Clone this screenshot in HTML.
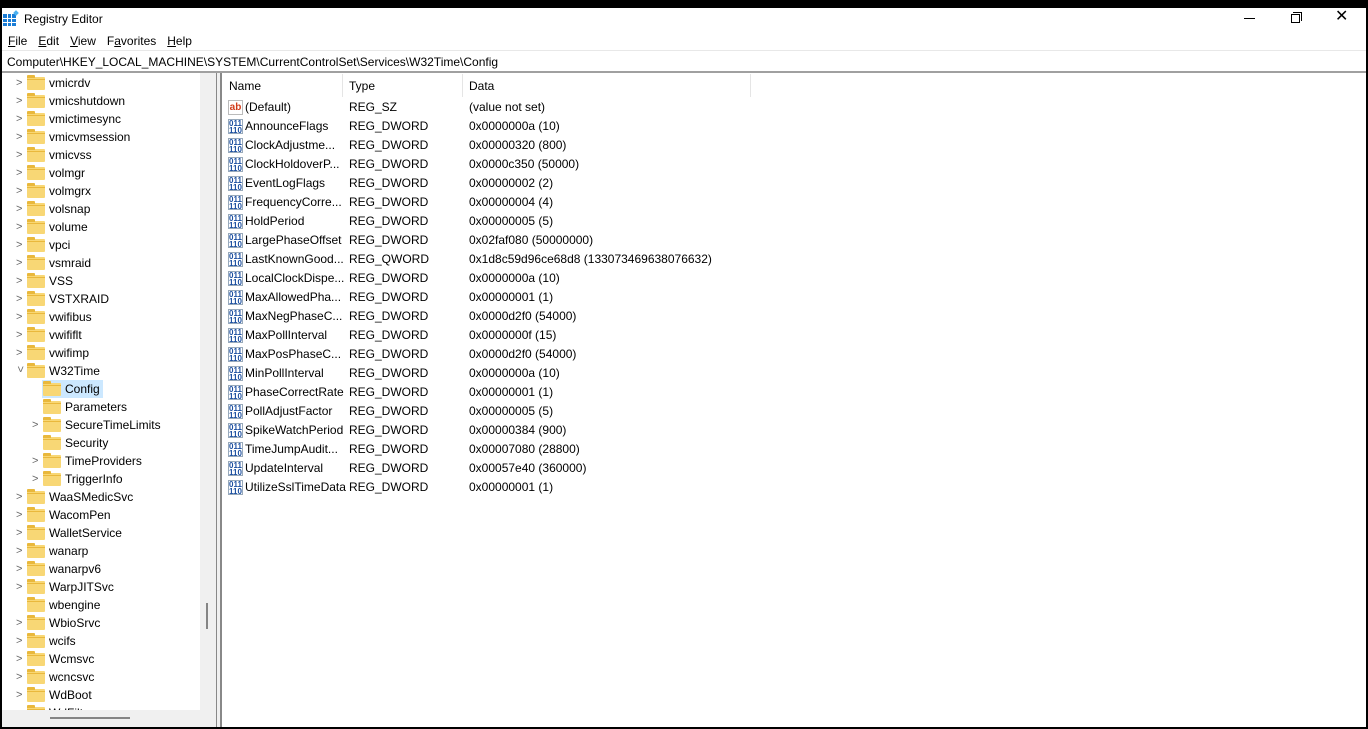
<!DOCTYPE html>
<html><head><meta charset="utf-8"><style>
*{margin:0;padding:0;box-sizing:border-box}
body{width:1368px;height:729px;overflow:hidden;background:#fff;font-family:"Liberation Sans",sans-serif;font-size:12px;color:#000;position:relative}
.a{position:absolute;white-space:nowrap}
.top{left:0;top:0;width:1368px;height:8px;background:#000}
.bot{left:0;top:727px;width:1368px;height:2px;background:#000}
.menu span{margin-right:11px}
.tr{position:absolute;height:18px;line-height:18px;white-space:nowrap}
.fd{position:absolute;top:3px;width:18px;height:13px;background:#f8d775;border-radius:1px}
.fd:before{content:"";position:absolute;left:0;top:-2px;width:8px;height:3px;background:#e9b83c;border-radius:1px 1px 0 0}
.fd:after{content:"";position:absolute;left:0;top:2px;width:18px;height:1px;background:#e9b83c}
.ch{position:absolute;top:0;width:10px;height:18px;color:#666;font-size:11px;line-height:18px}
.row{position:absolute;left:222px;height:19px;line-height:19px;white-space:nowrap;width:600px}
.row span{position:absolute;white-space:nowrap}
.ic{position:absolute;left:6px;top:2px;width:15px;height:15px;font-size:8px;font-weight:bold;line-height:7px;text-align:center;border:1px solid #9ab;background:#fff}
</style></head><body>
<div class="a top"></div>
<div class="a bot"></div>
<div class="a" style="left:0;top:8px;width:2px;height:721px;background:#000"></div>
<div class="a" style="left:1366px;top:8px;width:2px;height:721px;background:#000"></div>

<svg class="a" style="left:3px;top:10px" width="16" height="17" viewBox="0 0 16 17"><rect x="0" y="4" width="13" height="12" fill="#1a7dd6"/><g stroke="#fff" stroke-width="1"><line x1="4.5" y1="4" x2="4.5" y2="16"/><line x1="8.5" y1="4" x2="8.5" y2="16"/><line x1="0" y1="8.5" x2="13" y2="8.5"/><line x1="0" y1="12.5" x2="13" y2="12.5"/></g><rect x="11" y="1" width="4" height="4" fill="#4ab0f0" transform="rotate(45 13 3)"/></svg>
<div class="a" style="left:24px;top:12px;font-size:12px">Registry Editor</div>
<div class="a" style="left:1244px;top:18px;width:11px;height:1px;background:#000"></div>
<div class="a" style="left:1291px;top:14px;width:9px;height:9px;border:1px solid #000"></div>
<div class="a" style="left:1293px;top:12px;width:9px;height:9px;border-top:1px solid #000;border-right:1px solid #000"></div>
<div class="a" style="left:1335px;top:8px;font-size:16px;line-height:18px">✕</div>

<div class="a menu" style="left:8px;top:34px"><span><u>F</u>ile</span><span><u>E</u>dit</span><span><u>V</u>iew</span><span>F<u>a</u>vorites</span><span><u>H</u>elp</span></div>
<div class="a" style="left:2px;top:50px;width:1364px;height:1px;background:#e8e8e8"></div>
<div class="a" style="left:7px;top:55px">Computer\HKEY_LOCAL_MACHINE\SYSTEM\CurrentControlSet\Services\W32Time\Config</div>
<div class="a" style="left:2px;top:71px;width:1364px;height:2px;background:#a0a0a0"></div>

<div class="a" style="left:2px;top:73px;width:214px;height:654px;background:#f0f0f0"></div>
<div class="a" style="left:2px;top:73px;width:198px;height:637px;background:#fff"></div>
<div class="a" style="left:2px;top:74px;width:198px;height:636px;overflow:hidden">
<div class="a" style="left:40px;top:306px;width:61px;height:18px;background:#cce8ff"></div>
<div class="tr" style="left:0;top:0px;width:198px"><span class="ch" style="left:14px">&gt;</span><span class="fd" style="left:25px"></span><span class="a" style="left:47px">vmicrdv</span></div>
<div class="tr" style="left:0;top:18px;width:198px"><span class="ch" style="left:14px">&gt;</span><span class="fd" style="left:25px"></span><span class="a" style="left:47px">vmicshutdown</span></div>
<div class="tr" style="left:0;top:36px;width:198px"><span class="ch" style="left:14px">&gt;</span><span class="fd" style="left:25px"></span><span class="a" style="left:47px">vmictimesync</span></div>
<div class="tr" style="left:0;top:54px;width:198px"><span class="ch" style="left:14px">&gt;</span><span class="fd" style="left:25px"></span><span class="a" style="left:47px">vmicvmsession</span></div>
<div class="tr" style="left:0;top:72px;width:198px"><span class="ch" style="left:14px">&gt;</span><span class="fd" style="left:25px"></span><span class="a" style="left:47px">vmicvss</span></div>
<div class="tr" style="left:0;top:90px;width:198px"><span class="ch" style="left:14px">&gt;</span><span class="fd" style="left:25px"></span><span class="a" style="left:47px">volmgr</span></div>
<div class="tr" style="left:0;top:108px;width:198px"><span class="ch" style="left:14px">&gt;</span><span class="fd" style="left:25px"></span><span class="a" style="left:47px">volmgrx</span></div>
<div class="tr" style="left:0;top:126px;width:198px"><span class="ch" style="left:14px">&gt;</span><span class="fd" style="left:25px"></span><span class="a" style="left:47px">volsnap</span></div>
<div class="tr" style="left:0;top:144px;width:198px"><span class="ch" style="left:14px">&gt;</span><span class="fd" style="left:25px"></span><span class="a" style="left:47px">volume</span></div>
<div class="tr" style="left:0;top:162px;width:198px"><span class="ch" style="left:14px">&gt;</span><span class="fd" style="left:25px"></span><span class="a" style="left:47px">vpci</span></div>
<div class="tr" style="left:0;top:180px;width:198px"><span class="ch" style="left:14px">&gt;</span><span class="fd" style="left:25px"></span><span class="a" style="left:47px">vsmraid</span></div>
<div class="tr" style="left:0;top:198px;width:198px"><span class="ch" style="left:14px">&gt;</span><span class="fd" style="left:25px"></span><span class="a" style="left:47px">VSS</span></div>
<div class="tr" style="left:0;top:216px;width:198px"><span class="ch" style="left:14px">&gt;</span><span class="fd" style="left:25px"></span><span class="a" style="left:47px">VSTXRAID</span></div>
<div class="tr" style="left:0;top:234px;width:198px"><span class="ch" style="left:14px">&gt;</span><span class="fd" style="left:25px"></span><span class="a" style="left:47px">vwifibus</span></div>
<div class="tr" style="left:0;top:252px;width:198px"><span class="ch" style="left:14px">&gt;</span><span class="fd" style="left:25px"></span><span class="a" style="left:47px">vwififlt</span></div>
<div class="tr" style="left:0;top:270px;width:198px"><span class="ch" style="left:14px">&gt;</span><span class="fd" style="left:25px"></span><span class="a" style="left:47px">vwifimp</span></div>
<div class="tr" style="left:0;top:288px;width:198px"><span class="ch" style="left:13px;transform:rotate(90deg)">&gt;</span><span class="fd" style="left:25px"></span><span class="a" style="left:47px">W32Time</span></div>
<div class="tr" style="left:0;top:306px;width:198px"><span class="fd" style="left:41px"></span><span class="a" style="left:63px">Config</span></div>
<div class="tr" style="left:0;top:324px;width:198px"><span class="fd" style="left:41px"></span><span class="a" style="left:63px">Parameters</span></div>
<div class="tr" style="left:0;top:342px;width:198px"><span class="ch" style="left:30px">&gt;</span><span class="fd" style="left:41px"></span><span class="a" style="left:63px">SecureTimeLimits</span></div>
<div class="tr" style="left:0;top:360px;width:198px"><span class="fd" style="left:41px"></span><span class="a" style="left:63px">Security</span></div>
<div class="tr" style="left:0;top:378px;width:198px"><span class="ch" style="left:30px">&gt;</span><span class="fd" style="left:41px"></span><span class="a" style="left:63px">TimeProviders</span></div>
<div class="tr" style="left:0;top:396px;width:198px"><span class="ch" style="left:30px">&gt;</span><span class="fd" style="left:41px"></span><span class="a" style="left:63px">TriggerInfo</span></div>
<div class="tr" style="left:0;top:414px;width:198px"><span class="ch" style="left:14px">&gt;</span><span class="fd" style="left:25px"></span><span class="a" style="left:47px">WaaSMedicSvc</span></div>
<div class="tr" style="left:0;top:432px;width:198px"><span class="ch" style="left:14px">&gt;</span><span class="fd" style="left:25px"></span><span class="a" style="left:47px">WacomPen</span></div>
<div class="tr" style="left:0;top:450px;width:198px"><span class="ch" style="left:14px">&gt;</span><span class="fd" style="left:25px"></span><span class="a" style="left:47px">WalletService</span></div>
<div class="tr" style="left:0;top:468px;width:198px"><span class="ch" style="left:14px">&gt;</span><span class="fd" style="left:25px"></span><span class="a" style="left:47px">wanarp</span></div>
<div class="tr" style="left:0;top:486px;width:198px"><span class="ch" style="left:14px">&gt;</span><span class="fd" style="left:25px"></span><span class="a" style="left:47px">wanarpv6</span></div>
<div class="tr" style="left:0;top:504px;width:198px"><span class="ch" style="left:14px">&gt;</span><span class="fd" style="left:25px"></span><span class="a" style="left:47px">WarpJITSvc</span></div>
<div class="tr" style="left:0;top:522px;width:198px"><span class="fd" style="left:25px"></span><span class="a" style="left:47px">wbengine</span></div>
<div class="tr" style="left:0;top:540px;width:198px"><span class="ch" style="left:14px">&gt;</span><span class="fd" style="left:25px"></span><span class="a" style="left:47px">WbioSrvc</span></div>
<div class="tr" style="left:0;top:558px;width:198px"><span class="ch" style="left:14px">&gt;</span><span class="fd" style="left:25px"></span><span class="a" style="left:47px">wcifs</span></div>
<div class="tr" style="left:0;top:576px;width:198px"><span class="ch" style="left:14px">&gt;</span><span class="fd" style="left:25px"></span><span class="a" style="left:47px">Wcmsvc</span></div>
<div class="tr" style="left:0;top:594px;width:198px"><span class="ch" style="left:14px">&gt;</span><span class="fd" style="left:25px"></span><span class="a" style="left:47px">wcncsvc</span></div>
<div class="tr" style="left:0;top:612px;width:198px"><span class="ch" style="left:14px">&gt;</span><span class="fd" style="left:25px"></span><span class="a" style="left:47px">WdBoot</span></div>
<div class="tr" style="left:0;top:630px;width:198px"><span class="fd" style="left:25px"></span><span class="a" style="left:47px">WdFilter</span></div>
</div>
<div class="a" style="left:206px;top:603px;width:2px;height:26px;background:#858585"></div>
<div class="a" style="left:50px;top:717px;width:80px;height:2px;background:#858585"></div>
<div class="a" style="left:216px;top:73px;width:1px;height:654px;background:#888"></div>
<div class="a" style="left:217px;top:73px;width:3px;height:654px;background:#f0f0f0"></div>
<div class="a" style="left:220px;top:73px;width:2px;height:654px;background:#888"></div>

<div class="a" style="left:229px;top:79px">Name</div>
<div class="a" style="left:349px;top:79px">Type</div>
<div class="a" style="left:469px;top:79px">Data</div>
<div class="a" style="left:342px;top:74px;width:1px;height:23px;background:#e5e5e5"></div>
<div class="a" style="left:462px;top:74px;width:1px;height:23px;background:#e5e5e5"></div>
<div class="a" style="left:750px;top:74px;width:1px;height:23px;background:#e5e5e5"></div>

<div class="row" style="top:98px"><span class="ic" style="border-color:#bbb;color:#d13b1a;font-size:10px;line-height:13px">ab</span><span style="left:23px">(Default)</span><span style="left:127px">REG_SZ</span><span style="left:247px">(value not set)</span></div>
<div class="row" style="top:117px"><span class="ic" style="color:#1c4fa0">011<br>110</span><span style="left:23px">AnnounceFlags</span><span style="left:127px">REG_DWORD</span><span style="left:247px">0x0000000a (10)</span></div>
<div class="row" style="top:136px"><span class="ic" style="color:#1c4fa0">011<br>110</span><span style="left:23px">ClockAdjustme...</span><span style="left:127px">REG_DWORD</span><span style="left:247px">0x00000320 (800)</span></div>
<div class="row" style="top:155px"><span class="ic" style="color:#1c4fa0">011<br>110</span><span style="left:23px">ClockHoldoverP...</span><span style="left:127px">REG_DWORD</span><span style="left:247px">0x0000c350 (50000)</span></div>
<div class="row" style="top:174px"><span class="ic" style="color:#1c4fa0">011<br>110</span><span style="left:23px">EventLogFlags</span><span style="left:127px">REG_DWORD</span><span style="left:247px">0x00000002 (2)</span></div>
<div class="row" style="top:193px"><span class="ic" style="color:#1c4fa0">011<br>110</span><span style="left:23px">FrequencyCorre...</span><span style="left:127px">REG_DWORD</span><span style="left:247px">0x00000004 (4)</span></div>
<div class="row" style="top:212px"><span class="ic" style="color:#1c4fa0">011<br>110</span><span style="left:23px">HoldPeriod</span><span style="left:127px">REG_DWORD</span><span style="left:247px">0x00000005 (5)</span></div>
<div class="row" style="top:231px"><span class="ic" style="color:#1c4fa0">011<br>110</span><span style="left:23px">LargePhaseOffset</span><span style="left:127px">REG_DWORD</span><span style="left:247px">0x02faf080 (50000000)</span></div>
<div class="row" style="top:250px"><span class="ic" style="color:#1c4fa0">011<br>110</span><span style="left:23px">LastKnownGood...</span><span style="left:127px">REG_QWORD</span><span style="left:247px">0x1d8c59d96ce68d8 (133073469638076632)</span></div>
<div class="row" style="top:269px"><span class="ic" style="color:#1c4fa0">011<br>110</span><span style="left:23px">LocalClockDispe...</span><span style="left:127px">REG_DWORD</span><span style="left:247px">0x0000000a (10)</span></div>
<div class="row" style="top:288px"><span class="ic" style="color:#1c4fa0">011<br>110</span><span style="left:23px">MaxAllowedPha...</span><span style="left:127px">REG_DWORD</span><span style="left:247px">0x00000001 (1)</span></div>
<div class="row" style="top:307px"><span class="ic" style="color:#1c4fa0">011<br>110</span><span style="left:23px">MaxNegPhaseC...</span><span style="left:127px">REG_DWORD</span><span style="left:247px">0x0000d2f0 (54000)</span></div>
<div class="row" style="top:326px"><span class="ic" style="color:#1c4fa0">011<br>110</span><span style="left:23px">MaxPollInterval</span><span style="left:127px">REG_DWORD</span><span style="left:247px">0x0000000f (15)</span></div>
<div class="row" style="top:345px"><span class="ic" style="color:#1c4fa0">011<br>110</span><span style="left:23px">MaxPosPhaseC...</span><span style="left:127px">REG_DWORD</span><span style="left:247px">0x0000d2f0 (54000)</span></div>
<div class="row" style="top:364px"><span class="ic" style="color:#1c4fa0">011<br>110</span><span style="left:23px">MinPollInterval</span><span style="left:127px">REG_DWORD</span><span style="left:247px">0x0000000a (10)</span></div>
<div class="row" style="top:383px"><span class="ic" style="color:#1c4fa0">011<br>110</span><span style="left:23px">PhaseCorrectRate</span><span style="left:127px">REG_DWORD</span><span style="left:247px">0x00000001 (1)</span></div>
<div class="row" style="top:402px"><span class="ic" style="color:#1c4fa0">011<br>110</span><span style="left:23px">PollAdjustFactor</span><span style="left:127px">REG_DWORD</span><span style="left:247px">0x00000005 (5)</span></div>
<div class="row" style="top:421px"><span class="ic" style="color:#1c4fa0">011<br>110</span><span style="left:23px">SpikeWatchPeriod</span><span style="left:127px">REG_DWORD</span><span style="left:247px">0x00000384 (900)</span></div>
<div class="row" style="top:440px"><span class="ic" style="color:#1c4fa0">011<br>110</span><span style="left:23px">TimeJumpAudit...</span><span style="left:127px">REG_DWORD</span><span style="left:247px">0x00007080 (28800)</span></div>
<div class="row" style="top:459px"><span class="ic" style="color:#1c4fa0">011<br>110</span><span style="left:23px">UpdateInterval</span><span style="left:127px">REG_DWORD</span><span style="left:247px">0x00057e40 (360000)</span></div>
<div class="row" style="top:478px"><span class="ic" style="color:#1c4fa0">011<br>110</span><span style="left:23px">UtilizeSslTimeData</span><span style="left:127px">REG_DWORD</span><span style="left:247px">0x00000001 (1)</span></div>
</body></html>
